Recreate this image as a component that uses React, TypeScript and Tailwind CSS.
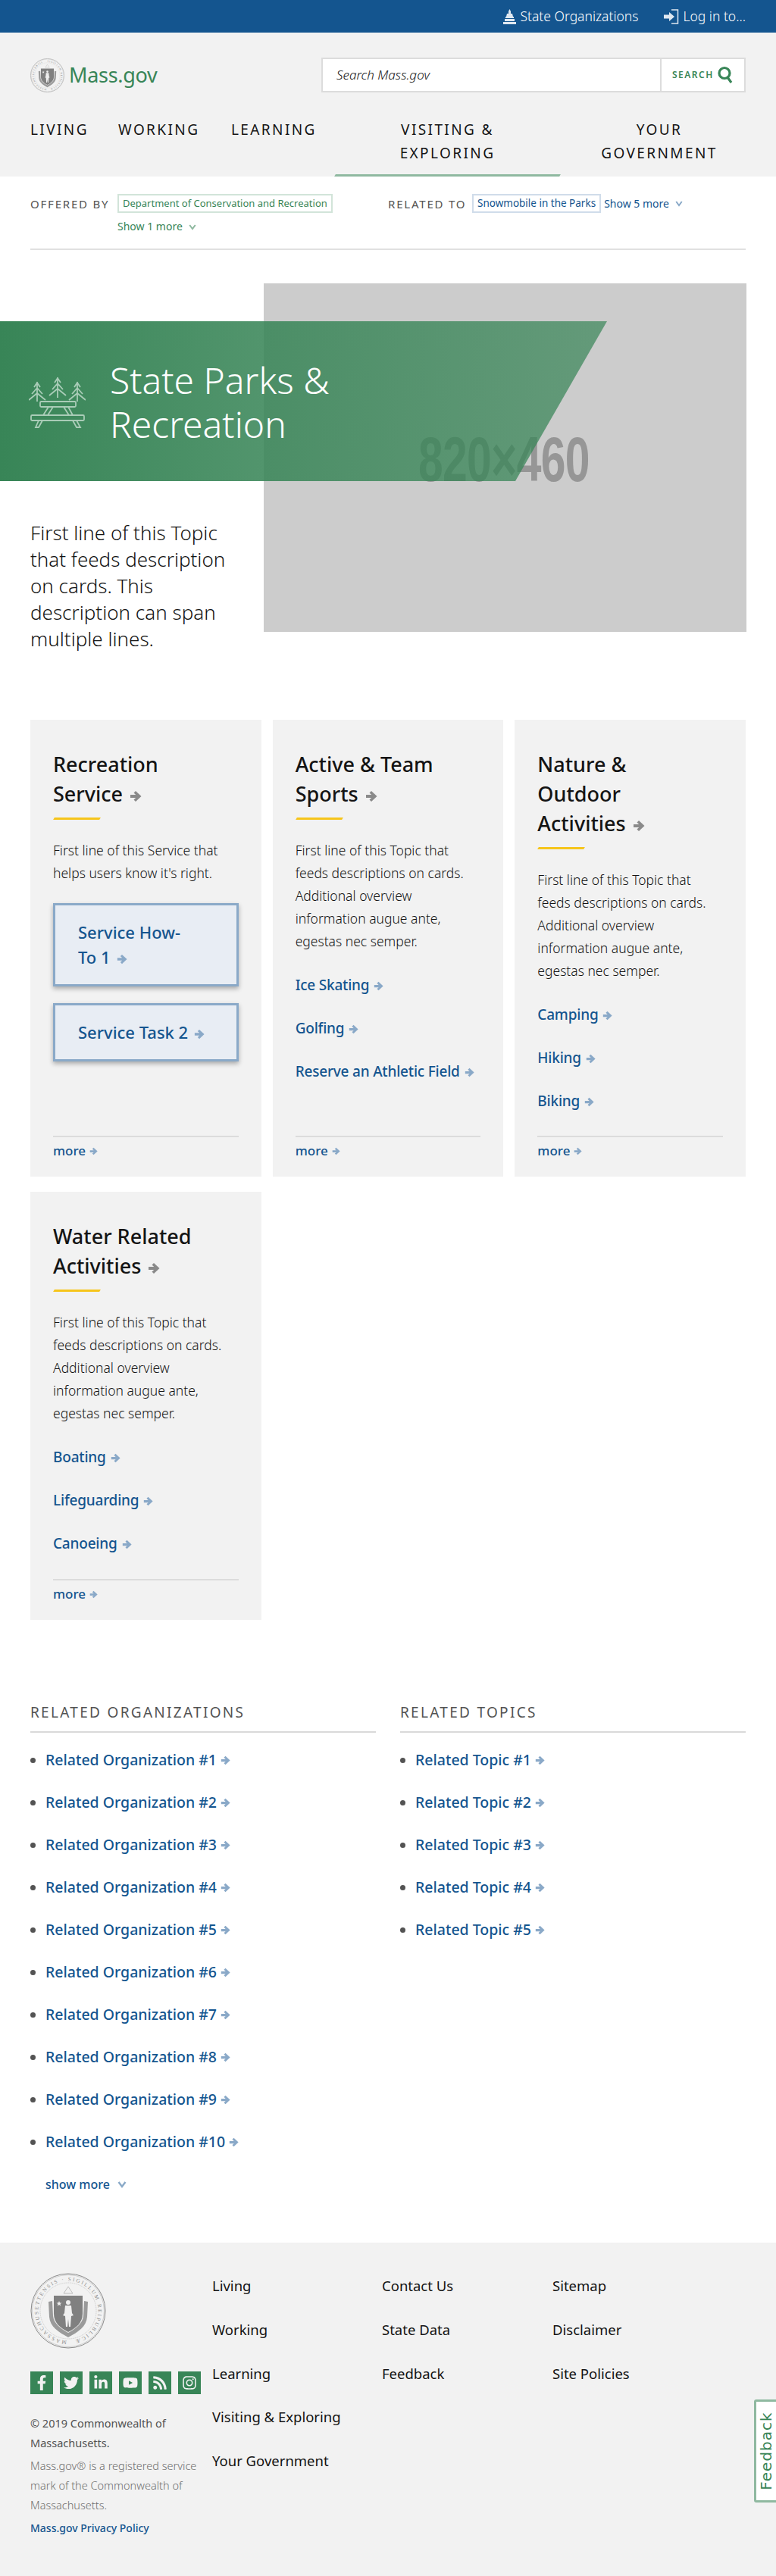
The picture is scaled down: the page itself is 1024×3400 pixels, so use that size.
import React from "react";
import { FaFacebookF, FaTwitter, FaLinkedinIn, FaYoutube, FaRss, FaInstagram } from "react-icons/fa";

const Arrow = ({ className }: { className?: string }) => (
  <svg viewBox="0 0 16 16" className={className} fill="currentColor" aria-hidden="true">
    <path d="M8 1l7.500 7L8 15l-2.500-2.500L8.200 10H1V6h7.200L5.500 3.500z" />
  </svg>
);

const Chevron = ({ className }: { className?: string }) => (
  <svg viewBox="0 0 12 10" className={className} fill="none" stroke="currentColor" strokeWidth="2.400" aria-hidden="true">
    <path d="M1.500 2 6 8l4.500-6" />
  </svg>
);

const Seal = ({ className, id }: { className?: string; id: string }) => (
  <svg viewBox="0 0 100 100" className={className} aria-hidden="true">
    <circle cx="50" cy="50" r="49" fill="#f2f2f2" stroke="#8a8a8a" strokeWidth="1" />
    <circle cx="50" cy="50" r="47.500" fill="none" stroke="#a8a8a8" strokeWidth="0.500" />
    <circle cx="50" cy="50" r="37" fill="none" stroke="#b5b5b5" strokeWidth="0.700" strokeDasharray="0.800 0.800" />
    <defs>
      <path id={id} d="M50 89.500a39.500 39.500 0 1 1 0-79a39.500 39.500 0 1 1 0 79" />
    </defs>
    <text fontSize="7" fill="#8a8a8a" fontFamily="'Liberation Serif', serif">
      <textPath href={`#${id}`} startOffset="2" textLength="236">MASSACHUSETTENSIS · SIGILLUM REIPUBLICÆ</textPath>
    </text>
    <path d="M31 30h38v24c0 12-9 19-19 24-10-5-19-12-19-24z" fill="#808080" />
    <path d="M24 38l5-1 1 20c1 9 9 16 20 22 11-6 19-13 20-22l1-20 5 1-1 20c-1 13-12 20-25 27-13-7-24-14-25-27z" fill="#9a9a9a" />
    <path d="M50 36a3 3 0 1 1 0 6 3 3 0 0 1 0-6zm-4 7h8l1 10 2 3-3 1-1 14h-2l-1-10-1 10h-2l-1-14-3-1 2-3z" fill="#efefef" />
    <path d="M38 37l1 2.400 2.500.1-2 1.500.7 2.400-2.200-1.400-2.200 1.400.7-2.400-2-1.500 2.500-.1z" fill="#efefef" />
    <path d="M44 27l6-9 6 9z" fill="none" stroke="#b0b0b0" strokeWidth="0.800" />
  </svg>
);

const TableIcon = () => (
  <svg viewBox="0 0 75 68" className="w-[75px] h-[68px] shrink-0 text-[#a9ccb7]" fill="none" stroke="currentColor" strokeWidth="1.800" aria-hidden="true">
    <path d="M11 33V7M7 14l4-6 4 6M4 23l7-8 7 8M0 31l11-9 11 9" />
    <path d="M38 28V1M34 8l4-6 4 6M31 17l7-8 7 8M27 25l11-9 11 9" />
    <path d="M64 33V7M60 14l4-6 4 6M57 23l7-8 7 8M53 31l11-9 11 9" />
    <rect x="15" y="33" width="47" height="7" rx="1.500" />
    <rect x="3" y="51" width="70" height="7" rx="1.500" />
    <path d="M26 40l-7 11M32 40l-7 11M46 40l7 11M52 40l6 11" />
    <path d="M13 58l-4 9h4l5-9M58 58l5 9h5l-5-9" />
  </svg>
);

const Card = ({
  title,
  desc,
  links,
}: {
  title: string[];
  desc: string[];
  links?: string[];
}) => (
  <div className="bg-[#f2f2f2] px-[30px] pt-[39px] pb-[22px] flex flex-col">
    <h2 className="text-[27px] leading-[39px] font-medium text-[#141414]">
      {title.map((t, i) => (
        <span key={i} className="block whitespace-nowrap">
          {t}
          {i === title.length - 1 && <Arrow className="inline-block w-[16px] h-[16px] ml-[9px] text-[#8a8a8a] align-[-1px]" />}
        </span>
      ))}
    </h2>
    <div className="w-[61px] h-[3px] bg-[#f6c51b] mt-[12px] ml-[1px] -skew-x-[30deg]" />
    <p className="mt-[25px] text-[17.500px] leading-[30px] font-light text-[#141414]">
      {desc.map((d, i) => (
        <span key={i} className="block whitespace-nowrap">{d}</span>
      ))}
    </p>
    {links && (
      <ul className="mt-[29px] flex flex-col gap-[29px]">
        {links.map((l) => (
          <li key={l} className="text-[19px] leading-[28px] font-medium text-[#14558f] whitespace-nowrap tracking-[-0.2px]">
            {l}
            <Arrow className="inline-block w-[13px] h-[13px] ml-[6px] text-[#8aa9c8] align-[-1px]" />
          </li>
        ))}
      </ul>
    )}
    {!links && (
      <div className="mt-[25px] flex flex-col gap-[22px]">
        <a className="block border-[3px] border-[#8aa9c8] bg-[#e8edf4] px-[30px] py-[19px] text-[22px] leading-[33px] font-medium text-[#14558f] shadow-[0_3px_6px_rgba(0,0,0,0.3)]">
          <span className="block">Service How-</span>
          <span className="block">
            To 1<Arrow className="inline-block w-[14px] h-[14px] ml-[8px] text-[#8aa9c8] align-[-1px]" />
          </span>
        </a>
        <a className="block border-[3px] border-[#8aa9c8] bg-[#e8edf4] px-[30px] py-[19px] text-[22px] leading-[33px] font-medium text-[#14558f] shadow-[0_3px_6px_rgba(0,0,0,0.3)]">
          Service Task 2<Arrow className="inline-block w-[14px] h-[14px] ml-[8px] text-[#8aa9c8] align-[-1px]" />
        </a>
      </div>
    )}
    <div className="mt-auto border-t-2 border-[#dcdcdc] pt-[6px] text-[17px] leading-[24px] font-medium text-[#14558f]">
      more<Arrow className="inline-block w-[11px] h-[11px] ml-[5px] text-[#8aa9c8] align-[0px]" />
    </div>
  </div>
);

const RelatedList = ({ heading, items }: { heading: string; items: string[] }) => (
  <div>
    <h3 className="text-[19px] leading-[28px] tracking-[2.300px] text-[#535353] border-b-2 border-[#d9d9d9] pb-[11px]">{heading}</h3>
    <ul className="mt-[22px] flex flex-col gap-[28px]">
      {items.map((it) => (
        <li key={it} className="flex items-center text-[19.500px] leading-[28px] font-medium text-[#14558f]">
          <span className="w-[7px] h-[7px] rounded-full bg-[#535353] mr-[13px]" />
          {it}
          <Arrow className="w-[13px] h-[13px] ml-[5px] text-[#8aa9c8]" />
        </li>
      ))}
    </ul>
  </div>
);

const socials = [FaFacebookF, FaTwitter, FaLinkedinIn, FaYoutube, FaRss, FaInstagram];
const orgs = Array.from({ length: 10 }, (_, i) => `Related Organization #${i + 1}`);
const topics = Array.from({ length: 5 }, (_, i) => `Related Topic #${i + 1}`);

export default function App() {
  return (
    <div className="relative w-[1024px] h-[3400px] overflow-hidden bg-white font-['Noto_Sans','Lato',sans-serif] text-[#141414]">
      {/* top bar */}
      <div className="h-[43px] bg-[#14558f] flex items-center justify-end pr-[40px] text-white text-[17.500px]">
        <svg viewBox="0 0 17 20" className="w-[17px] h-[20px] mr-[5px]" fill="#dfe8f1" aria-hidden="true">
          <path d="M8.500 0l1.500 3v3h2l1 4h1v2H3v-2h1l1-4h2V3zM2 13h13v3H2zM0 17h17v3H0z" />
        </svg>
        <span className="font-light">State Organizations</span>
        <svg viewBox="0 0 20 20" className="w-[20px] h-[20px] ml-[34px] mr-[5px]" fill="none" aria-hidden="true">
          <path d="M10 1h8.500v18H10" stroke="#dfe8f1" strokeWidth="1.500" />
          <path d="M7 4l7 6-7 6v-3.500H0v-5h7z" fill="#dfe8f1" />
        </svg>
        <span className="font-light">Log in to...</span>
      </div>

      {/* header */}
      <header className="bg-[#f2f2f2] h-[190px]">
        <div className="flex items-center justify-between px-[40px] pt-[33px]">
          <div className="flex items-center">
            <Seal id="seal-top" className="w-[45px] h-[45px]" />
            <span className="ml-[6px] text-[27px] leading-[46px] tracking-[-0.3px] text-[#388557]">Mass.gov</span>
          </div>
          <div className="flex w-[560px] h-[46px] border-2 border-[#dcdcdc] bg-white">
            <div className="flex-1 pl-[18px] text-[17px] leading-[42px] italic font-light text-[#141414]">Search Mass.gov</div>
            <div className="w-[111px] border-l-2 border-[#dcdcdc] flex items-center pl-[14px]">
              <span className="text-[12px] font-semibold tracking-[1.500px] text-[#388557]">SEARCH</span>
              <svg viewBox="0 0 20 24" className="w-[20px] h-[24px] ml-[5px]" fill="none" stroke="#388557" strokeWidth="3.200" aria-hidden="true">
                <circle cx="9" cy="9.500" r="7" />
                <path d="M13 15l5 7" />
              </svg>
            </div>
          </div>
        </div>
        <nav className="flex pl-[40px] mt-[34px] text-[19px] leading-[31px] tracking-[2.400px] text-[#141414]">
          <span className="w-[116px]">LIVING</span>
          <span className="w-[149px]">WORKING</span>
          <span className="w-[137px]">LEARNING</span>
          <span className="relative w-[297px] h-[76.500px] text-center">
            VISITING &amp;<br />EXPLORING
            <span className="absolute left-0 right-0 bottom-0 h-[3px] bg-[#8fb9a0] -skew-x-[30deg]" />
          </span>
          <span className="w-[262px] text-center">YOUR<br />GOVERNMENT</span>
        </nav>
      </header>

      {/* offered by */}
      <div className="mx-[40px] h-[97px] border-b-2 border-[#e0e0e0] flex pt-[23px]">
        <div className="w-[472px] flex items-start">
          <span className="w-[115px] text-[15px] leading-[26px] tracking-[1.800px] text-[#535353] whitespace-nowrap">OFFERED BY</span>
          <div>
            <div className="border-2 border-[#d2e4d9] h-[25px] px-[5px] text-[13px] leading-[21px] text-[#388557] whitespace-nowrap">Department of Conservation and Recreation</div>
            <div className="mt-[4px] text-[14px] leading-[28px] text-[#388557] flex items-center">
              Show 1 more<Chevron className="w-[10px] h-[9px] ml-[8px] text-[#8fb9a0]" />
            </div>
          </div>
        </div>
        <div className="flex items-start">
          <span className="w-[111px] text-[15px] leading-[26px] tracking-[1.800px] text-[#535353] whitespace-nowrap">RELATED TO</span>
          <div className="border-2 border-[#d0dcea] h-[25px] px-[5px] text-[13.500px] leading-[21px] text-[#14558f] whitespace-nowrap">Snowmobile in the Parks</div>
          <div className="ml-[4px] text-[14px] leading-[25px] text-[#14558f] flex items-center">
            Show 5 more<Chevron className="w-[10px] h-[9px] ml-[8px] text-[#8aa9c8]" />
          </div>
        </div>
      </div>

      {/* hero */}
      <section className="relative flex mt-[44px] pl-[40px]">
        <p className="w-[308px] pt-[312px] text-[26px] leading-[35px] font-light text-[#141414]">
          <span className="block whitespace-nowrap">First line of this Topic</span>
          <span className="block whitespace-nowrap">that feeds description</span>
          <span className="block whitespace-nowrap">on cards. This</span>
          <span className="block whitespace-nowrap">description can span</span>
          <span className="block whitespace-nowrap">multiple lines.</span>
        </p>
        <div className="relative w-[637px] h-[460px] bg-[#cccccc]">
          <span className="absolute left-[204px] top-[184px] text-[84px] leading-[96px] font-bold tracking-[-1px] text-[#969696] scale-x-[0.7] origin-left font-['Liberation_Sans',sans-serif] whitespace-nowrap">820×460</span>
        </div>
        <div className="absolute left-0 top-[50px] w-[801px] h-[211px] flex items-center pl-[38px] pt-[2px] [clip-path:polygon(0_0,100%_0,84.900%_100%,0_100%)] bg-gradient-to-r from-[#388557] to-[#388557b3]">
          <TableIcon />
          <h1 className="ml-[32px] text-[48px] leading-[58px] font-light text-white">
            State Parks &amp;<br />Recreation
          </h1>
        </div>
      </section>

      {/* cards */}
      <section className="mx-[40px] mt-[89px] grid grid-cols-3 gap-x-[15px] gap-y-[20px] auto-rows-auto">
        <div className="h-[603px] grid">
          <Card
            title={["Recreation", "Service"]}
            desc={["First line of this Service that", "helps users know it's right."]}
          />
        </div>
        <div className="h-[603px] grid">
          <Card
            title={["Active & Team", "Sports"]}
            desc={["First line of this Topic that", "feeds descriptions on cards.", "Additional overview", "information augue ante,", "egestas nec semper."]}
            links={["Ice Skating", "Golfing", "Reserve an Athletic Field"]}
          />
        </div>
        <div className="h-[603px] grid">
          <Card
            title={["Nature &", "Outdoor", "Activities"]}
            desc={["First line of this Topic that", "feeds descriptions on cards.", "Additional overview", "information augue ante,", "egestas nec semper."]}
            links={["Camping", "Hiking", "Biking"]}
          />
        </div>
        <div className="h-[565px] grid">
          <Card
            title={["Water Related", "Activities"]}
            desc={["First line of this Topic that", "feeds descriptions on cards.", "Additional overview", "information augue ante,", "egestas nec semper."]}
            links={["Boating", "Lifeguarding", "Canoeing"]}
          />
        </div>
      </section>

      {/* related */}
      <section className="mx-[40px] mt-[108px] grid grid-cols-2 gap-x-[32px]">
        <div>
          <RelatedList heading="RELATED ORGANIZATIONS" items={orgs} />
          <div className="mt-[30px] ml-[20px] flex items-center text-[16px] leading-[24px] font-medium text-[#14558f]">
            show more<Chevron className="w-[12px] h-[10px] ml-[10px] text-[#8aa9c8]" />
          </div>
        </div>
        <RelatedList heading="RELATED TOPICS" items={topics} />
      </section>

      {/* footer */}
      <footer className="absolute left-0 right-0 top-[2960px] bottom-0 bg-[#f2f2f2] flex pl-[40px] pt-[40px]">
        <div className="w-[240px]">
          <Seal id="seal-bottom" className="w-[100px] h-[100px]" />
          <div className="mt-[30px] flex gap-[9px]">
            {socials.map((Icon, i) => (
              <span key={i} className="w-[30px] h-[30px] bg-[#388557] flex items-center justify-center text-[#f2f2f2]">
                <Icon className="w-[20px] h-[20px]" />
              </span>
            ))}
          </div>
          <p className="mt-[25px] text-[14.500px] leading-[26px] text-[#535353] whitespace-nowrap">© 2019 Commonwealth of<br />Massachusetts.</p>
          <p className="mt-[4px] text-[14.500px] leading-[26px] font-light text-[#707070] whitespace-nowrap">Mass.gov® is a registered service<br />mark of the Commonwealth of<br />Massachusetts.</p>
          <p className="mt-[5px] text-[14px] leading-[26px] font-medium text-[#14558f]">Mass.gov Privacy Policy</p>
        </div>
        <ul className="w-[224px] text-[18.500px] leading-[28px] flex flex-col gap-[29.800px] pt-[3px]">
          <li>Living</li>
          <li>Working</li>
          <li>Learning</li>
          <li>Visiting &amp; Exploring</li>
          <li>Your Government</li>
        </ul>
        <ul className="w-[225px] text-[18.500px] leading-[28px] flex flex-col gap-[29.800px] pt-[3px]">
          <li>Contact Us</li>
          <li>State Data</li>
          <li>Feedback</li>
        </ul>
        <ul className="text-[18.500px] leading-[28px] flex flex-col gap-[29.800px] pt-[3px]">
          <li>Sitemap</li>
          <li>Disclaimer</li>
          <li>Site Policies</li>
        </ul>
      </footer>

      {/* feedback tab */}
      <div className="absolute left-[995px] top-[3167px] w-[40px] h-[136px] bg-white border-[3px] border-[#8fb9a0] rounded-l-[3px] flex items-center">
        <span className="block w-[26px] h-[130px] relative">
          <span className="absolute left-[13px] top-[65px] -translate-x-1/2 -translate-y-1/2 -rotate-90 text-[20px] tracking-[1px] text-[#388557] font-['DejaVu_Sans',sans-serif] whitespace-nowrap">Feedback</span>
        </span>
      </div>
    </div>
  );
}
